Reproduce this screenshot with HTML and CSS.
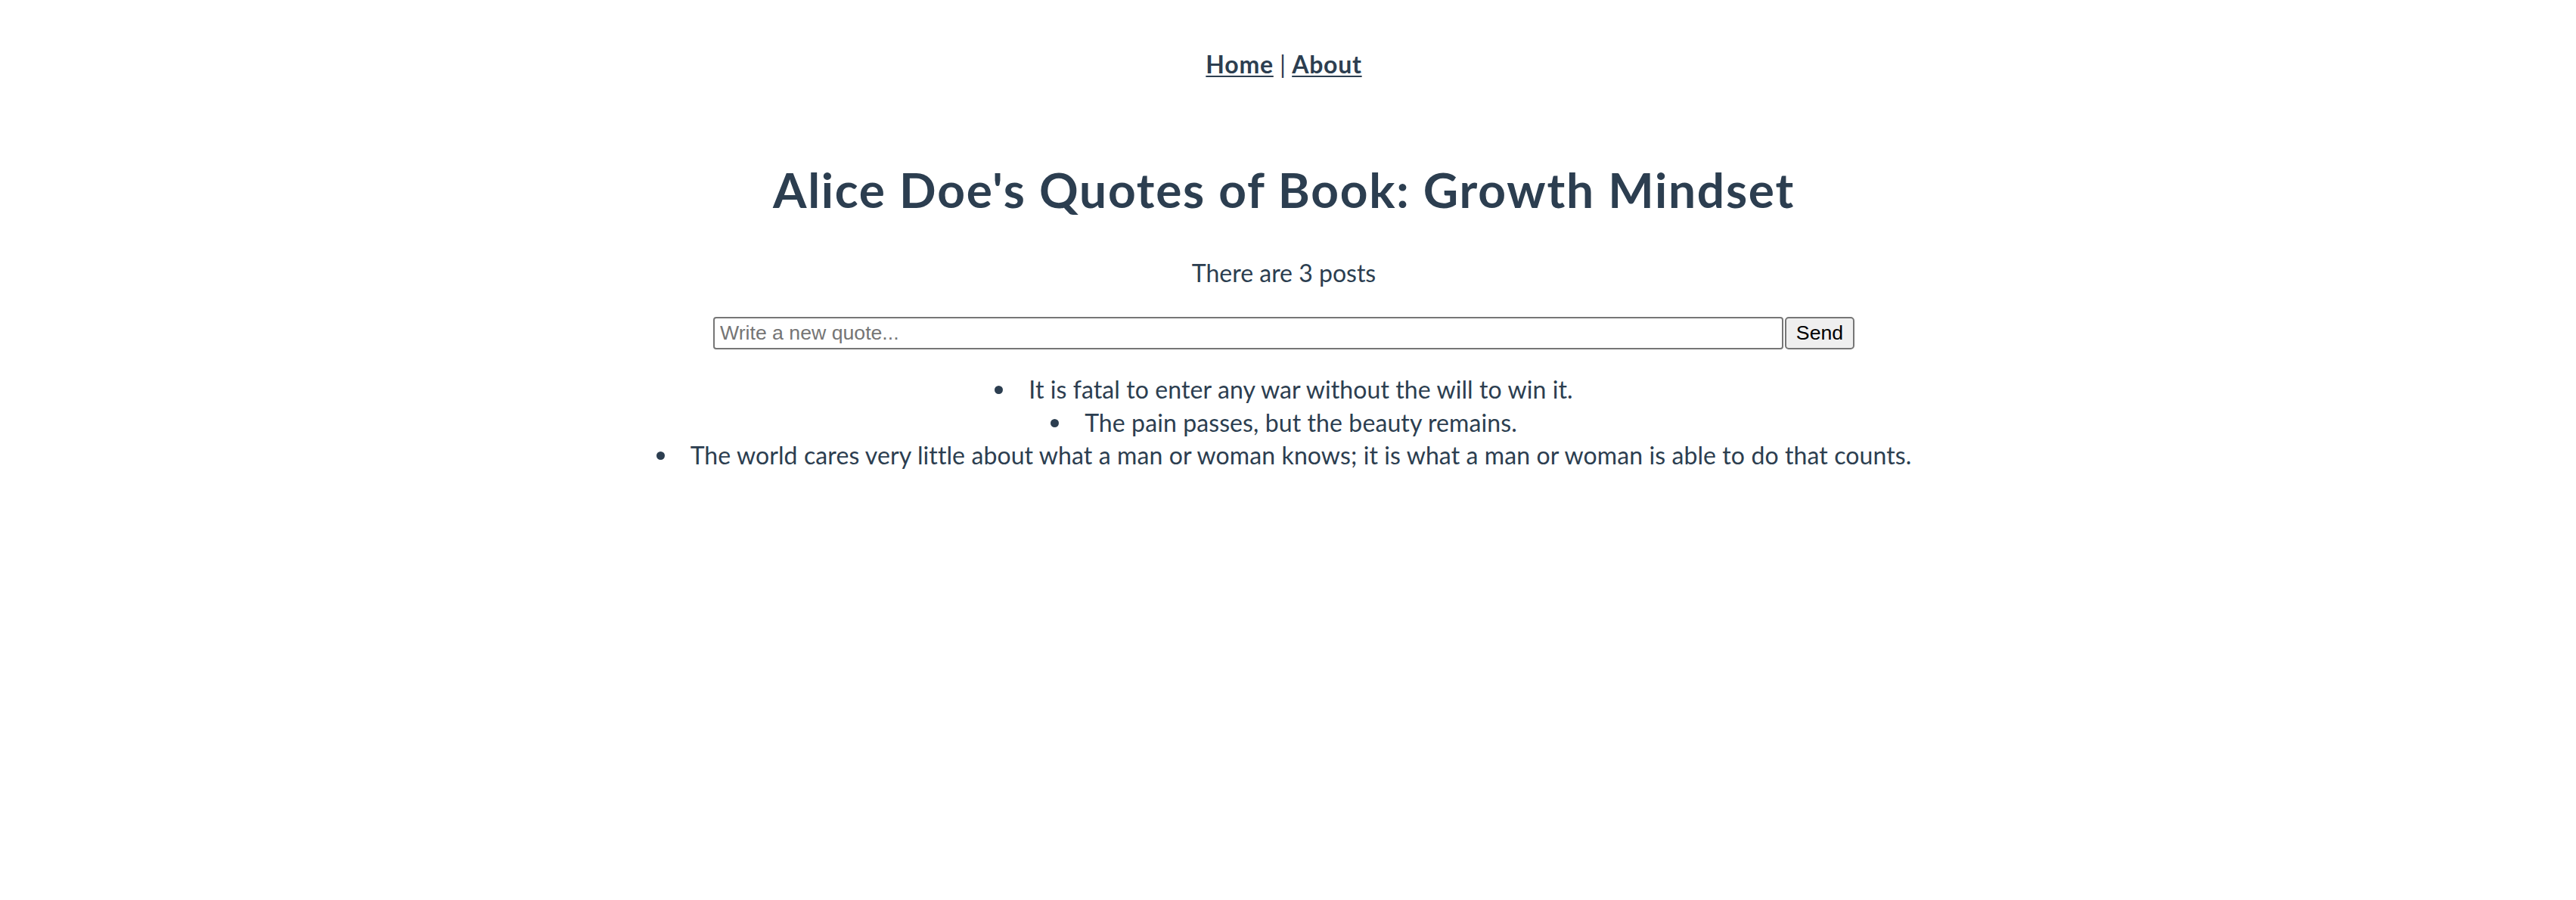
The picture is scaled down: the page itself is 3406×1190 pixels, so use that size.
FILE: index.html
```html
<!DOCTYPE html>
<html lang="en">
<head>
<meta charset="utf-8">
<title>Alice Doe's Quotes</title>
<link rel="stylesheet" href="styles.css">
</head>
<body>
<div class="app">
  <nav class="nav"><a href="#" class="nav-link">Home</a> | <a href="#" class="nav-link">About</a></nav>
  <main class="book">
    <h1 class="title">Alice Doe's Quotes of Book: Growth Mindset</h1>
    <p class="count">There are 3 posts</p>
    <form class="quote-form">
      <input class="quote-input" type="text" placeholder="Write a new quote...">
      <button class="quote-send" type="button">Send</button>
    </form>
    <ul class="quotes">
      <li class="quote">It is fatal to enter any war without the will to win it.</li>
      <li class="quote">The pain passes, but the beauty remains.</li>
      <li class="quote">The world cares very little about what a man or woman knows; it is what a man or woman is able to do that counts.</li>
    </ul>
  </main>
</div>
</body>
</html>
```
FILE: styles.css
```css
html, body {
  margin: 0;
  padding: 0;
  background: #ffffff;
}

.app {
  margin-right: 11px;
  font-family: Lato, "Liberation Sans", sans-serif;
  font-size: 32px;
  color: #2c3e50;
  text-align: center;
}

.nav {
  padding-top: 63px;
  line-height: 44px;
}

.nav-link {
  color: #2c3e50;
  font-weight: 700;
  letter-spacing: 0.75px;
  text-decoration: underline;
  text-decoration-thickness: 2px;
  text-underline-offset: 3px;
}

.title {
  margin: 100px 0 0;
  font-size: 64px;
  line-height: 88px;
  font-weight: 700;
  letter-spacing: 1.76px;
}

.count {
  margin: 44px 0 0;
  line-height: 44px;
}

.quote-form {
  margin-top: 36px;
  display: flex;
  justify-content: center;
  gap: 2px;
}

.quote-input {
  box-sizing: border-box;
  width: 1415px;
  height: 43px;
  margin: 0;
  padding: 0 7px;
  border: 2px solid #767676;
  border-radius: 4px;
  font-family: "Liberation Sans", Arial, sans-serif;
  font-size: 26.67px;
  color: #000;
  background: #fff;
}

.quote-input::placeholder {
  color: #757575;
}

.quote-send {
  box-sizing: border-box;
  width: 92px;
  height: 43px;
  margin: 0;
  padding: 0;
  border: 2px solid #767676;
  border-radius: 5px;
  background: #efefef;
  font-family: "Liberation Sans", Arial, sans-serif;
  font-size: 26.67px;
  color: #000;
}

.quotes {
  margin: 31px 0 0;
  padding: 0;
  list-style: none;
  line-height: 43.5px;
}

.quote {
  letter-spacing: 0.1px;
}

.quote::before {
  content: "";
  display: inline-block;
  width: 11px;
  height: 11px;
  margin: 0 34px 6px 0;
  border-radius: 50%;
  background: #2c3e50;
}
```
